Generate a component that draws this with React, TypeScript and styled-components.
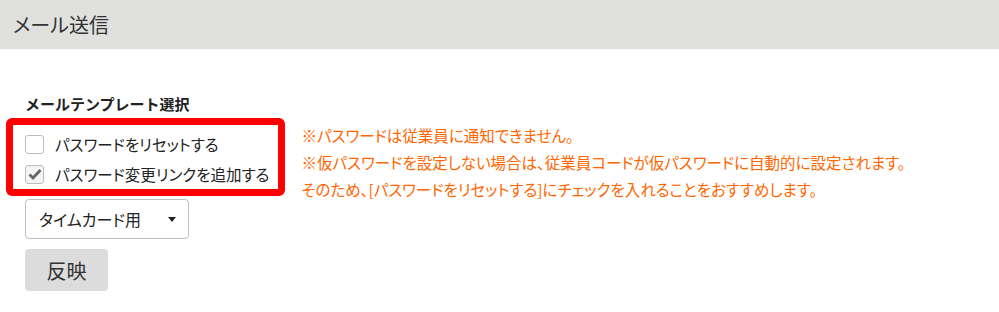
import styled, { createGlobalStyle } from "styled-components";

const GlobalStyle = createGlobalStyle`
  html, body {
    margin: 0;
    padding: 0;
    background: #ffffff;
  }
  body {
    font-family: "Noto Sans CJK JP", "Noto Sans", sans-serif;
    font-feature-settings: "palt";
    color: #333333;
  }
`;

const PageHeader = styled.div`
  height: 49px;
  background: #e0e0de;
  display: flex;
  align-items: center;
  padding-left: 13px;
  font-size: 20px;
  color: #333333;
`;

const Main = styled.div`
  padding: 44px 0 0 25px;
`;

const SectionLabel = styled.div`
  font-size: 15px;
  font-weight: bold;
  font-feature-settings: normal;
  line-height: 22px;
  color: #222222;
  margin-bottom: 3px;
`;

const OptionRow = styled.div`
  display: flex;
  align-items: flex-start;
  gap: 16px;
  margin-left: -19px;
`;

const Highlight = styled.div`
  border: 7px solid #ff0000;
  border-radius: 6px;
  padding: 4px 9px 0 12px;
`;

const CheckRow = styled.label`
  display: flex;
  align-items: center;
  gap: 11px;
  height: 30px;
  font-size: 15.5px;
  color: #222222;
`;

const Box = styled.span<{ $checked?: boolean }>`
  width: 17px;
  height: 17px;
  border: 1px solid #bdbdbd;
  border-radius: 3px;
  background: ${(p) => (p.$checked ? "#f4f4f4" : "#ffffff")};
  display: flex;
  align-items: center;
  justify-content: center;
  flex-shrink: 0;
`;

const Notes = styled.div`
  box-sizing: border-box;
  height: 78px;
  padding-top: 4px;
  font-size: 15.5px;
  line-height: 27px;
  color: #ff6600;
`;

const Select = styled.div`
  margin-top: 3px;
  width: 137px;
  height: 38px;
  border: 1px solid #c0c0c0;
  border-radius: 4px;
  display: flex;
  align-items: center;
  justify-content: space-between;
  padding: 0 12px 0 13px;
  font-size: 16px;
  color: #222222;
`;

const Caret = styled.span`
  width: 0;
  height: 0;
  border-left: 4px solid transparent;
  border-right: 4px solid transparent;
  border-top: 5px solid #222222;
`;

const ApplyButton = styled.button`
  display: block;
  margin-top: 10px;
  width: 83px;
  height: 42px;
  border: none;
  border-radius: 4px;
  background: #dcdcdc;
  font-family: inherit;
  font-feature-settings: "palt";
  font-size: 20px;
  color: #333333;
  padding: 0;
`;

function Check({ checked }: { checked?: boolean }) {
  return (
    <Box $checked={checked}>
      {checked && (
        <svg width="14" height="12" viewBox="0 0 14 12">
          <path d="M1.5 6.5 L5 10 L12.5 2" fill="none" stroke="#666666" strokeWidth="2.8" />
        </svg>
      )}
    </Box>
  );
}

function App() {
  return (
    <>
      <GlobalStyle />
      <PageHeader>メール送信</PageHeader>
      <Main>
        <SectionLabel>メールテンプレート選択</SectionLabel>
        <OptionRow>
          <Highlight>
            <CheckRow>
              <Check />
              パスワードをリセットする
            </CheckRow>
            <CheckRow>
              <Check checked />
              パスワード変更リンクを追加する
            </CheckRow>
          </Highlight>
          <Notes>
            <div>※パスワードは従業員に通知できません。</div>
            <div>※仮パスワードを設定しない場合は、従業員コードが仮パスワードに自動的に設定されます。</div>
            <div>そのため、[パスワードをリセットする]にチェックを入れることをおすすめします。</div>
          </Notes>
        </OptionRow>
        <Select>
          タイムカード用
          <Caret />
        </Select>
        <ApplyButton>反映</ApplyButton>
      </Main>
    </>
  );
}

export default App;
